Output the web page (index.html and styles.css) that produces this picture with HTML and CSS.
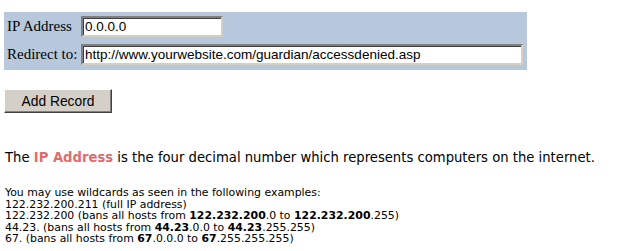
FILE: index.html
```html
<!DOCTYPE html>
<html>
<head>
<meta charset="utf-8">
<title>Guardian - Add Record</title>
<link rel="stylesheet" href="styles.css">
</head>
<body>
<form class="record-form">
  <div class="panel">
    <label class="lbl" for="ip">IP Address</label>
    <input class="field field-ip" id="ip" type="text" value="0.0.0.0">
    <label class="lbl" for="redir">Redirect to:</label>
    <input class="field field-url" id="redir" type="text" value="http://www.yourwebsite.com/guardian/accessdenied.asp">
  </div>
  <button class="btn" type="button">Add Record</button>
</form>
<p class="intro">The <span class="hl">IP Address</span> is the four decimal number which represents computers on the internet.</p>
<p class="examples">You may use wildcards as seen in the following examples:<br>
122.232.200.211 (full IP address)<br>
122.232.200 (bans all hosts from <b>122.232.200</b>.0 to <b>122.232.200</b>.255)<br>
44.23. (bans all hosts from <b>44.23</b>.0.0 to <b>44.23</b>.255.255)<br>
67. (bans all hosts from <b>67</b>.0.0.0 to <b>67</b>.255.255.255)</p>
</body>
</html>
```
FILE: styles.css
```css
html, body {
  margin: 0;
  padding: 0;
  background: #ffffff;
}
body {
  padding: 12px 0 0 4px;
  color: #000000;
}
.record-form {
  margin: 0;
}
.panel {
  display: grid;
  grid-template-columns: 74px auto;
  justify-content: start;
  align-items: center;
  row-gap: 7px;
  width: 516px;
  padding: 4px 4px 5px 3px;
  background: #b7c8dd;
}
.lbl {
  font-family: "Liberation Serif", "Times New Roman", serif;
  font-size: 15px;
  white-space: nowrap;
  color: #000;
}
.field {
  box-sizing: border-box;
  height: 21px;
  margin: 0;
  padding: 1px 2px;
  font-family: "Liberation Sans", Arial, sans-serif;
  font-size: 13.5px;
  color: #000;
  background: #fff;
  border: 2px solid;
  border-color: #808080 #d4d0c8 #d4d0c8 #808080;
  box-shadow: inset 1px 1px 0 #404040, inset -1px -1px 0 #ffffff;
  outline: none;
}
.field-ip {
  width: 142px;
}
.field-url {
  width: 442px;
}
.btn {
  display: block;
  box-sizing: border-box;
  width: 108px;
  height: 24px;
  margin: 19px 0 0 0;
  padding: 0;
  font-family: "Liberation Sans", Arial, sans-serif;
  font-size: 13.8px;
  color: #000;
  background: #d4d0c8;
  border: 1px solid;
  border-color: #ffffff #404040 #404040 #ffffff;
  box-shadow: inset -1px -1px 0 #808080;
}
.intro {
  margin: 37px 0 0 1px;
  font-family: "DejaVu Sans", Verdana, sans-serif;
  font-size: 13.2px;
  line-height: 15px;
}
.hl {
  color: #e06c6c;
  font-weight: bold;
}
.examples {
  margin: 22px 0 0 1px;
  font-family: "DejaVu Sans", Verdana, sans-serif;
  font-size: 10.9px;
  line-height: 11.5px;
}
.examples b {
  font-weight: bold;
}
```
